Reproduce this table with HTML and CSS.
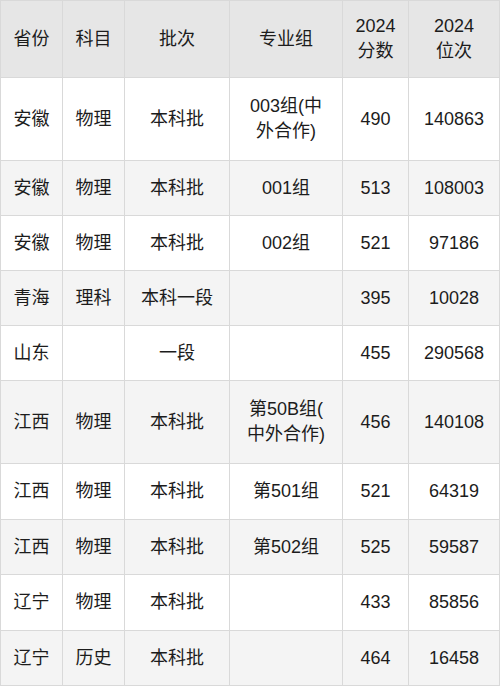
FILE: index.html
```html
<!DOCTYPE html>
<html lang="zh">
<head>
<meta charset="utf-8">
<link rel="stylesheet" href="styles.css">
</head>
<body>
<table class="score-table">
  <colgroup>
    <col class="c1"><col class="c2"><col class="c3"><col class="c4"><col class="c5"><col class="c6">
  </colgroup>
  <thead>
    <tr class="head">
      <th>省份</th><th>科目</th><th>批次</th><th>专业组</th><th>2024<br>分数</th><th>2024<br>位次</th>
    </tr>
  </thead>
  <tbody>
    <tr class="tall"><td>安徽</td><td>物理</td><td>本科批</td><td>003组(中<br>外合作)</td><td>490</td><td>140863</td></tr>
    <tr class="alt"><td>安徽</td><td>物理</td><td>本科批</td><td>001组</td><td>513</td><td>108003</td></tr>
    <tr><td>安徽</td><td>物理</td><td>本科批</td><td>002组</td><td>521</td><td>97186</td></tr>
    <tr class="alt"><td>青海</td><td>理科</td><td>本科一段</td><td></td><td>395</td><td>10028</td></tr>
    <tr><td>山东</td><td></td><td>一段</td><td></td><td>455</td><td>290568</td></tr>
    <tr class="alt tall"><td>江西</td><td>物理</td><td>本科批</td><td>第50B组(<br>中外合作)</td><td>456</td><td>140108</td></tr>
    <tr class="wide"><td>江西</td><td>物理</td><td>本科批</td><td>第501组</td><td>521</td><td>64319</td></tr>
    <tr class="alt"><td>江西</td><td>物理</td><td>本科批</td><td>第502组</td><td>525</td><td>59587</td></tr>
    <tr class="wide"><td>辽宁</td><td>物理</td><td>本科批</td><td></td><td>433</td><td>85856</td></tr>
    <tr class="alt"><td>辽宁</td><td>历史</td><td>本科批</td><td></td><td>464</td><td>16458</td></tr>
  </tbody>
</table>
</body>
</html>
```
FILE: styles.css
```css
html, body {
  margin: 0;
  padding: 0;
  background: #ffffff;
}
.score-table {
  width: 499px;
  table-layout: fixed;
  border-collapse: collapse;
  font-family: "Liberation Sans", "Noto Sans CJK SC", sans-serif;
  font-size: 18px;
  line-height: 25px;
  color: #1c1c1c;
}
.c1 { width: 62px; }
.c2 { width: 62px; }
.c3 { width: 105px; }
.c4 { width: 113px; }
.c5 { width: 66px; }
.c6 { width: 91px; }
.score-table th,
.score-table td {
  border: 1px solid #d9d9d9;
  padding: 0 4px;
  text-align: center;
  vertical-align: middle;
  font-weight: normal;
}
.head {
  height: 77px;
  background: #e6e6e6;
}
.score-table tbody tr {
  height: 55px;
  background: #ffffff;
}
.score-table tbody tr.wide {
  height: 56px;
}
.score-table tbody tr.alt {
  background: #f4f4f4;
}
.score-table tbody tr.tall {
  height: 83px;
}
```
